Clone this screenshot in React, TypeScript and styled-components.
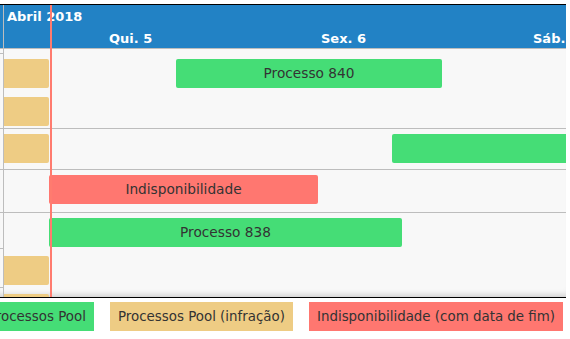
import * as React from 'react';
import styled, { createGlobalStyle } from 'styled-components';

const GlobalStyle = createGlobalStyle`
  html, body {
    margin: 0;
    padding: 0;
    background: #ffffff;
    overflow: hidden;
  }
  body {
    font-family: 'DejaVu Sans', Verdana, sans-serif;
  }
`;

const BLUE = '#2282c5';
const GRID = '#bdbdbd';

type Kind = 'pool' | 'infraction' | 'unavailable';

const kindColors: Record<Kind, string> = {
  pool: '#45dd76',
  infraction: '#eecc84',
  unavailable: '#ff7770',
};

interface BarData {
  left: number;
  width: number;
  kind: Kind;
  label?: string;
}

interface GroupData {
  padTop: number;
  height: number;
  lanes: BarData[][];
}

const clipped = { left: -10, width: 55 };

const groups: GroupData[] = [
  {
    padTop: 10,
    height: 80,
    lanes: [
      [
        { ...clipped, kind: 'infraction' },
        { left: 172, width: 266, kind: 'pool', label: 'Processo 840' },
      ],
      [{ ...clipped, kind: 'infraction' }],
    ],
  },
  {
    padTop: 5,
    height: 41,
    lanes: [
      [
        { ...clipped, kind: 'infraction' },
        { left: 388, width: 300, kind: 'pool' },
      ],
    ],
  },
  {
    padTop: 5,
    height: 43,
    lanes: [[{ left: 45, width: 269, kind: 'unavailable', label: 'Indisponibilidade' }]],
  },
  {
    padTop: 5,
    height: 84,
    lanes: [
      [{ left: 45, width: 353, kind: 'pool', label: 'Processo 838' }],
      [{ ...clipped, kind: 'infraction' }],
      [{ ...clipped, kind: 'infraction' }],
    ],
  },
];

// row heights of the narrow label column, each with its bottom rule
const sideRows = [5, 75, 41, 43, 36, 39];

const days = ['Qui. 5', 'Sex. 6', 'Sáb. 7'];

const legend: { kind: Kind; label: string }[] = [
  { kind: 'pool', label: 'Processos Pool' },
  { kind: 'infraction', label: 'Processos Pool (infração)' },
  { kind: 'unavailable', label: 'Indisponibilidade (com data de fim)' },
];

const Frame = styled.div`
  position: relative;
  display: flex;
  width: 566px;
  height: 292px;
  margin-top: 4px;
  border-top: 1px solid #000;
  border-bottom: 1px solid #000;
  background: #f8f8f8;
  overflow: hidden;
  box-shadow: inset 0 -7px 6px -5px rgba(0, 0, 0, 0.18);
`;

const Side = styled.div`
  flex: none;
  width: 4px;
  box-sizing: border-box;
  border-right: 1px solid ${GRID};
  display: flex;
  flex-direction: column;
`;

const SideHead = styled.div`
  flex: none;
  height: 43px;
  background: ${BLUE};
  border-bottom: 1px solid ${GRID};
`;

const SideCell = styled.div<{ $h: number }>`
  flex: none;
  height: ${(p) => p.$h}px;
  box-sizing: border-box;
  border-bottom: 1px solid ${GRID};
`;

const Main = styled.div`
  flex: 1;
  min-width: 0;
  display: flex;
  flex-direction: column;
  overflow: hidden;
`;

const TimeHeader = styled.div`
  flex: none;
  height: 43px;
  background: ${BLUE};
  border-bottom: 1px solid ${GRID};
  color: #ffffff;
  font-weight: bold;
  font-size: 13px;
  display: flex;
  flex-direction: column;
`;

const MonthRow = styled.div`
  height: 25px;
  line-height: 24px;
  padding-left: 3px;
  white-space: nowrap;
`;

const DayRow = styled.div`
  height: 18px;
  line-height: 18px;
  display: flex;
  padding-left: 105px;
  white-space: nowrap;
`;

const DayCell = styled.div`
  flex: none;
  width: 212px;
`;

const Group = styled.div<{ $h: number; $pad: number }>`
  flex: none;
  height: ${(p) => p.$h}px;
  box-sizing: border-box;
  padding-top: ${(p) => p.$pad}px;
  border-bottom: 1px solid ${GRID};
  display: flex;
  flex-direction: column;
  gap: 9px;

  &:last-child {
    border-bottom: none;
  }
`;

const Lane = styled.div`
  position: relative;
  flex: none;
  height: 29px;
`;

const Bar = styled.div<{ $kind: Kind }>`
  position: absolute;
  top: 0;
  height: 29px;
  border-radius: 2px;
  background: ${(p) => kindColors[p.$kind]};
  color: #333333;
  font-size: 13.7px;
  line-height: 29px;
  text-align: center;
  white-space: nowrap;
  overflow: hidden;
`;

const NowLine = styled.div`
  position: absolute;
  top: 0;
  bottom: 0;
  left: 50px;
  width: 2px;
  background: #ff7b6f;
`;

const Legend = styled.div`
  display: flex;
  gap: 16px;
  margin-top: 4px;
  margin-left: -20px;
`;

const LegendItem = styled.div<{ $kind: Kind }>`
  flex: none;
  height: 29px;
  line-height: 29px;
  padding: 0 8px;
  background: ${(p) => kindColors[p.$kind]};
  color: #333333;
  font-size: 13.4px;
  white-space: nowrap;
`;

function App(): JSX.Element {
  return (
    <>
      <GlobalStyle />
      <Frame>
        <Side>
          <SideHead />
          {sideRows.map((h, i) => (
            <SideCell key={i} $h={h} />
          ))}
        </Side>
        <Main>
          <TimeHeader>
            <MonthRow>Abril 2018</MonthRow>
            <DayRow>
              {days.map((d) => (
                <DayCell key={d}>{d}</DayCell>
              ))}
            </DayRow>
          </TimeHeader>
          {groups.map((g, gi) => (
            <Group key={gi} $h={g.height} $pad={g.padTop}>
              {g.lanes.map((lane, li) => (
                <Lane key={li}>
                  {lane.map((b, bi) => (
                    <Bar key={bi} $kind={b.kind} style={{ left: b.left, width: b.width }}>
                      {b.label}
                    </Bar>
                  ))}
                </Lane>
              ))}
            </Group>
          ))}
        </Main>
        <NowLine />
      </Frame>
      <Legend>
        {legend.map((l) => (
          <LegendItem key={l.kind} $kind={l.kind}>
            {l.label}
          </LegendItem>
        ))}
      </Legend>
    </>
  );
}

export default App;
